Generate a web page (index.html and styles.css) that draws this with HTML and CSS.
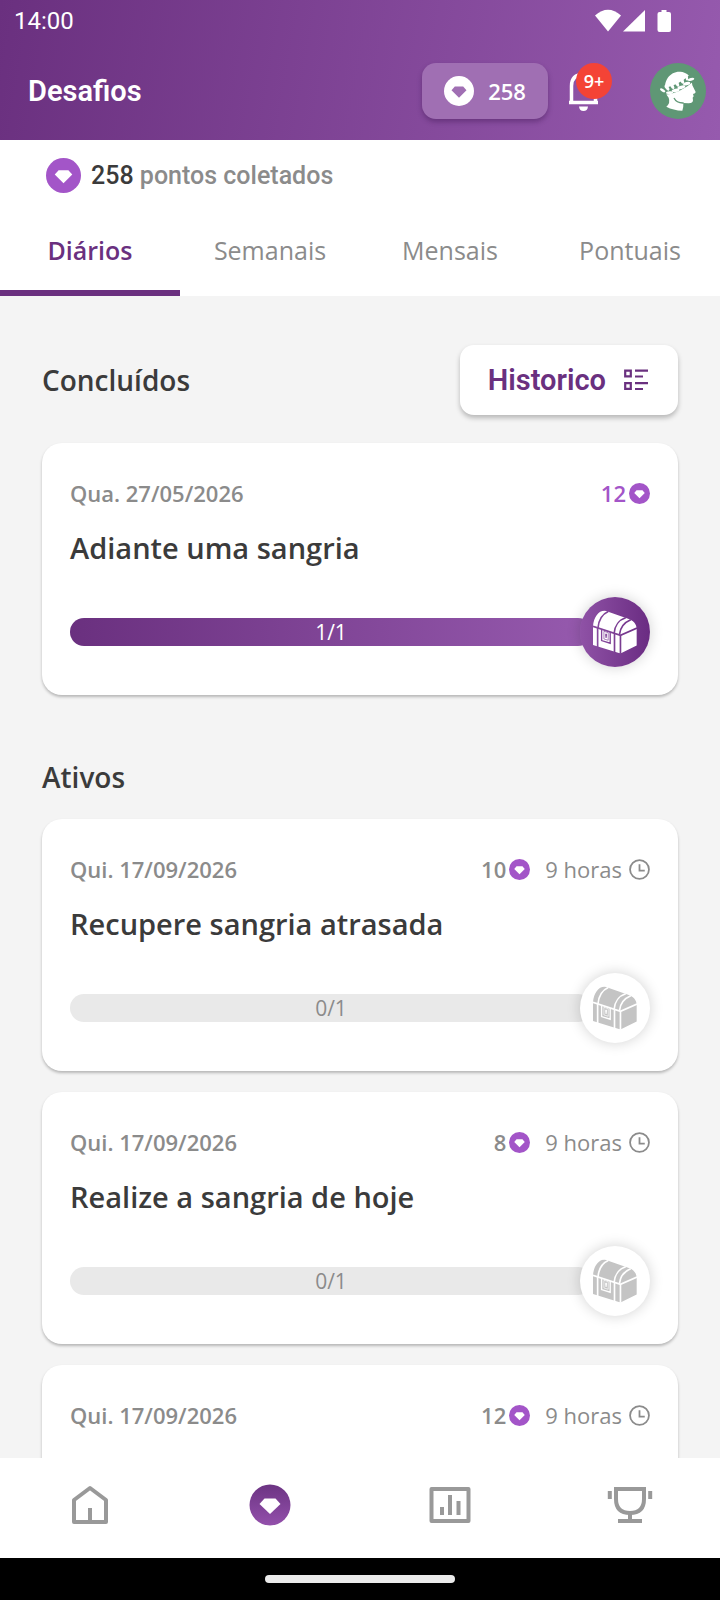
FILE: index.html
```html
<!DOCTYPE html>
<html lang="pt-BR">
<head>
    <meta charset="UTF-8">
    <meta name="viewport" content="width=device-width, initial-scale=1.0">
    <title>Desafios</title>
    <link rel="stylesheet" href="styles.css">
</head>
<body>
    <!-- shared icons -->
    <svg class="sprite" aria-hidden="true">
        <defs>
            <mask id="gem-hole">
                <rect width="36" height="36" fill="#fff"/>
                <path d="M13 12.500h10l4 4.500-9 9-9-9z" fill="#000"/>
            </mask>
            <mask id="chest-seams" maskUnits="userSpaceOnUse" x="0" y="0" width="133" height="132">
                <rect width="133" height="132" fill="#fff"/>
                <g fill="none" stroke="#000" stroke-width="5">
                    <path d="M0 49L83 76L133 54"/>
                    <path d="M15 54C17 32 28 12 46 4"/>
                    <path d="M14 54V112"/>
                    <path d="M64 69C66 47 79 29 99 23"/>
                    <path d="M80 74C82 53 95 37 114 29"/>
                    <path d="M65 70V128M83 76V132"/>
                    <path d="M26 58V92L52 100V66" stroke-width="4"/>
                </g>
                <path d="M33 64L46 68V91L33 87Z" fill="none" stroke="#000" stroke-width="2"/>
                <path d="M37 71h5v5l-1 8h-3l-1-8z" fill="#000"/>
            </mask>
        </defs>
        <symbol id="coin" viewBox="0 0 36 36">
            <circle cx="18" cy="18" r="18" fill="currentColor" mask="url(#gem-hole)"/>
        </symbol>
        <symbol id="chest" viewBox="0 0 133 132">
            <path d="M0 48C2 22 16 2 35 1L104 25C122 30 132 42 132 57V107L83 131L0 105Z" fill="currentColor" mask="url(#chest-seams)"/>
        </symbol>
        <symbol id="clock" viewBox="0 0 20 20">
            <circle cx="10" cy="10" r="9" fill="none" stroke="currentColor" stroke-width="1.700"/>
            <path d="M10 5v6h5" fill="none" stroke="currentColor" stroke-width="1.700"/>
        </symbol>
    </svg>

    <div class="app">
        <header class="header">
            <div class="status">
                <span>14:00</span>
                <svg class="status-icons" viewBox="0 0 78 24" fill="#fff" aria-hidden="true">
                    <path d="M0 6.500Q13-5 26 6.500L13 22.500z"/>
                    <path d="M50 1v21.500H28z"/>
                    <path d="M66.500 1h5v2H74q2 0 2 2v16q0 2-2 2H64.500q-2 0-2-2V5q0-2 2-2h2z"/>
                </svg>
            </div>
            <div class="toolbar">
                <h1>Desafios</h1>
                <button class="points" type="button">
                    <svg class="coin-points" aria-hidden="true"><use href="#coin"/></svg>
                    <span>258</span>
                </button>
                <button class="bell" type="button" aria-label="Notificações">
                    <svg viewBox="0 0 32 40" fill="none" aria-hidden="true">
                        <path d="M3.500 31V15C3.500 7 8 3.500 15.500 3.500S27.500 7 27.500 15V31" stroke="#fff" stroke-width="3.500"/>
                        <path d="M1 31.500h29" stroke="#fff" stroke-width="3.500"/>
                        <path d="M11 35.500h9q-.5 4.500-4.500 4.500t-4.500-4.500z" fill="#fff"/>
                    </svg>
                    <span class="badge">9+</span>
                </button>
                <button class="avatar" type="button" aria-label="Perfil">
                    <svg viewBox="31 24 168 168" aria-hidden="true">
                        <circle cx="115" cy="108" r="84" fill="#5f9775"/>
                        <path d="M77 108C71 76 92 48 122 50C140 52 151 61 156 78L158 91L168 111Q168 116 160 117L162 124L159 128L160 136Q160 145 147 145L131 144Q132 154 128 167Q101 166 80 155Q93 144 87 128Q80 121 77 108Z" fill="#fff"/>
                        <path d="M103 129Q111 145 132 144" fill="none" stroke="#5f9775" stroke-width="4"/>
                        <!-- laurel -->
                        <path d="M62 108Q110 112 160 66" fill="none" stroke="#5f9775" stroke-width="22"/>
                        <g fill="#fff">
                            <ellipse cx="82" cy="98" rx="10" ry="5" transform="rotate(55 82 98)"/>
                            <ellipse cx="97" cy="92" rx="11" ry="5" transform="rotate(62 97 92)"/>
                            <ellipse cx="112" cy="85" rx="11" ry="5" transform="rotate(66 112 85)"/>
                            <ellipse cx="127" cy="76" rx="11" ry="5" transform="rotate(70 127 76)"/>
                            <ellipse cx="141" cy="67" rx="10" ry="4" transform="rotate(80 141 67)"/>
                            <ellipse cx="69" cy="106" rx="9" ry="4" transform="rotate(30 69 106)"/>
                            <ellipse cx="90" cy="113" rx="11" ry="4" transform="rotate(-4 90 113)"/>
                            <ellipse cx="108" cy="106" rx="12" ry="5" transform="rotate(-10 108 106)"/>
                            <ellipse cx="125" cy="97" rx="12" ry="5" transform="rotate(-14 125 97)"/>
                            <ellipse cx="141" cy="86" rx="11" ry="5" transform="rotate(-14 141 86)"/>
                            <ellipse cx="154" cy="73" rx="10" ry="4" transform="rotate(-14 154 73)"/>
                        </g>
                    </svg>
                </button>
            </div>
        </header>

        <section class="summary">
            <p class="collected">
                <svg class="coin-lg" aria-hidden="true"><use href="#coin"/></svg>
                <span><b>258</b> pontos coletados</span>
            </p>
            <div class="tabs" role="tablist">
                <button class="tab active" type="button" role="tab" aria-selected="true">Diários</button>
                <button class="tab" type="button" role="tab" aria-selected="false">Semanais</button>
                <button class="tab" type="button" role="tab" aria-selected="false">Mensais</button>
                <button class="tab" type="button" role="tab" aria-selected="false">Pontuais</button>
            </div>
        </section>

        <main class="content">
            <div class="section-head">
                <h2>Concluídos</h2>
                <button class="history" type="button">
                    <span>Historico</span>
                    <svg viewBox="0 0 24 22" fill="none" stroke="currentColor" aria-hidden="true">
                        <path d="M1.200 1.700h5.600v5.600H1.200zM1.200 14.200h5.600v5.600H1.200z" stroke-width="2.200"/>
                        <path d="M11 1.700h13M11 7.500h8M11 14.200h13M11 20h8" stroke-width="2.200"/>
                    </svg>
                </button>
            </div>

            <article class="card done">
                <div class="meta">
                    <span class="date">Qua. 27/05/2026</span>
                    <span class="reward">12<svg class="coin-sm" aria-hidden="true"><use href="#coin"/></svg></span>
                </div>
                <h3>Adiante uma sangria</h3>
                <div class="progress">
                    <div class="bar">1/1</div>
                    <div class="knob"><svg aria-hidden="true"><use href="#chest"/></svg></div>
                </div>
            </article>

            <h2 class="section-title">Ativos</h2>

            <div class="list">
                <article class="card">
                    <div class="meta">
                        <span class="date">Qui. 17/09/2026</span>
                        <span class="reward">10<svg class="coin-sm" aria-hidden="true"><use href="#coin"/></svg></span>
                        <span class="time">9 horas<svg aria-hidden="true"><use href="#clock"/></svg></span>
                    </div>
                    <h3>Recupere sangria atrasada</h3>
                    <div class="progress">
                        <div class="bar">0/1</div>
                        <div class="knob"><svg aria-hidden="true"><use href="#chest"/></svg></div>
                    </div>
                </article>

                <article class="card">
                    <div class="meta">
                        <span class="date">Qui. 17/09/2026</span>
                        <span class="reward">8<svg class="coin-sm" aria-hidden="true"><use href="#coin"/></svg></span>
                        <span class="time">9 horas<svg aria-hidden="true"><use href="#clock"/></svg></span>
                    </div>
                    <h3>Realize a sangria de hoje</h3>
                    <div class="progress">
                        <div class="bar">0/1</div>
                        <div class="knob"><svg aria-hidden="true"><use href="#chest"/></svg></div>
                    </div>
                </article>

                <article class="card">
                    <div class="meta">
                        <span class="date">Qui. 17/09/2026</span>
                        <span class="reward">12<svg class="coin-sm" aria-hidden="true"><use href="#coin"/></svg></span>
                        <span class="time">9 horas<svg aria-hidden="true"><use href="#clock"/></svg></span>
                    </div>
                </article>
            </div>
        </main>

        <nav class="bottom-nav">
            <a href="#inicio" aria-label="Início">
                <svg viewBox="0 0 44 44" fill="none" stroke="currentColor" stroke-width="4" stroke-linejoin="round" aria-hidden="true">
                    <path d="M6 39V17L22 5L38 17V39Z"/>
                    <path d="M22 39V25"/>
                </svg>
            </a>
            <a href="#desafios" aria-label="Desafios">
                <svg viewBox="0 0 44 44" aria-hidden="true">
                    <defs>
                        <linearGradient id="coin-fill" x1="0" y1="0" x2="0" y2="1">
                            <stop offset="0" stop-color="#6c3483"/>
                            <stop offset="1" stop-color="#9350ab"/>
                        </linearGradient>
                    </defs>
                    <circle cx="22" cy="22" r="20.500" fill="url(#coin-fill)"/>
                    <path d="M16.500 15.500h11l5 5.500L22 31L11.500 21z" fill="#fff"/>
                </svg>
            </a>
            <a href="#relatorios" aria-label="Relatórios">
                <svg viewBox="0 0 44 44" fill="none" stroke="currentColor" stroke-width="4" aria-hidden="true">
                    <rect x="3.500" y="6" width="37" height="32" stroke-linejoin="round"/>
                    <path d="M14 32v-8M22 32V12M30.500 32V18"/>
                </svg>
            </a>
            <a href="#ranking" aria-label="Ranking">
                <svg viewBox="0 0 44 44" fill="none" stroke="currentColor" stroke-width="4" aria-hidden="true">
                    <path d="M8 6H36V16Q36 30 22 30T8 16Z"/>
                    <path d="M22 30v8M10 38h24"/>
                    <path d="M1.800 8v8M42.200 8v8"/>
                </svg>
            </a>
        </nav>
        <div class="gesture"><span></span></div>
    </div>
</body>
</html>
```
FILE: styles.css
```css
* {
    box-sizing: border-box;
}

body {
    margin: 0;
    font-family: "Open Sans", "Noto Sans", sans-serif;
    color: #3b3b3b;
    background-color: #f4f4f4;
}

h1, h2, h3, p {
    margin: 0;
}

button {
    padding: 0;
    border: none;
    background: none;
    font: inherit;
    color: inherit;
    cursor: pointer;
}

.sprite {
    position: absolute;
    width: 0;
    height: 0;
}

.app {
    display: flex;
    flex-direction: column;
    height: 100vh;
}

/* header */
.header {
    height: 140px;
    flex-shrink: 0;
    color: #fff;
    background: linear-gradient(100deg, #6a307f, #965aae);
}

.status {
    display: flex;
    justify-content: space-between;
    align-items: center;
    height: 42px;
    padding: 0 47px 0 14px;
    font-family: Roboto, sans-serif;
    font-size: 24px;
}

.status-icons {
    width: 78px;
    height: 24px;
}

.toolbar {
    display: flex;
    align-items: center;
    height: 98px;
    padding: 0 14px 0 28px;
}

.toolbar h1 {
    margin-right: auto;
    font-family: Roboto, sans-serif;
    font-size: 29px;
    font-weight: 600;
}

.points {
    display: flex;
    align-items: center;
    justify-content: center;
    gap: 14px;
    width: 126px;
    height: 56px;
    border-radius: 14px;
    background-color: #a06fb3;
    box-shadow: 0 3px 5px rgba(60, 20, 80, 0.4);
    font-size: 22px;
    font-weight: 600;
}

.coin-points {
    width: 30px;
    height: 30px;
}

.bell {
    position: relative;
    width: 32px;
    height: 40px;
    margin: 0 50px 0 20px;
}

.bell svg {
    display: block;
    width: 32px;
    height: 40px;
    overflow: visible;
}

.badge {
    position: absolute;
    top: -8px;
    left: 8px;
    width: 36px;
    height: 36px;
    border-radius: 50%;
    background-color: #f44336;
    font-size: 18px;
    font-weight: 600;
    line-height: 36px;
    text-align: center;
}

.avatar,
.avatar svg {
    display: block;
    width: 56px;
    height: 56px;
}

/* points and tabs */
.summary {
    flex-shrink: 0;
    background-color: #fff;
}

.collected {
    display: flex;
    align-items: center;
    gap: 10px;
    height: 70px;
    padding: 0 46px;
    font-family: Roboto, sans-serif;
    font-size: 25px;
    font-weight: 500;
    color: #8b8b8b;
}

.collected b {
    font-weight: 500;
    color: #3b3b3b;
}

.coin-lg {
    width: 35px;
    height: 35px;
    color: #a355c8;
}

.tabs {
    display: grid;
    grid-template-columns: repeat(4, 1fr);
}

.tab {
    height: 86px;
    border-bottom: 6px solid transparent;
    font-size: 25px;
    color: #8b8b8b;
}

.tab.active {
    border-color: #6a307f;
    font-weight: 600;
    color: #6a307f;
}

/* content */
.content {
    flex: 1;
    min-height: 0;
    padding: 49px 42px 0;
    overflow-y: auto;
    scrollbar-width: none;
}

.section-head {
    display: flex;
    justify-content: space-between;
    align-items: center;
    margin-bottom: 28px;
}

h2 {
    font-size: 28px;
    font-weight: 600;
    line-height: 36px;
}

.section-title {
    margin: 64px 0 24px;
}

.history {
    display: flex;
    align-items: center;
    gap: 18px;
    height: 70px;
    padding: 0 30px 0 28px;
    border-radius: 14px;
    background-color: #fff;
    box-shadow: 0 3px 5px rgba(0, 0, 0, 0.25);
    font-family: Roboto, sans-serif;
    font-size: 29px;
    font-weight: 600;
    color: #6a307f;
}

.history svg {
    width: 24px;
    height: 22px;
}

.list {
    display: grid;
    gap: 21px;
}

.card {
    height: 252px;
    padding: 35px 28px 0;
    border-radius: 20px;
    background-color: #fff;
    box-shadow: 0 2px 3px rgba(0, 0, 0, 0.25);
}

.meta {
    display: flex;
    align-items: center;
    gap: 15px;
    height: 30px;
    font-size: 22px;
    color: #8b8b8b;
}

.date {
    margin-right: auto;
    font-weight: 600;
}

.reward,
.time {
    display: flex;
    align-items: center;
}

.reward {
    gap: 3px;
    font-weight: 600;
}

.done .reward {
    color: #a355c8;
}

.coin-sm {
    width: 21px;
    height: 21px;
    color: #a355c8;
}

.time {
    gap: 7px;
}

.time svg {
    width: 21px;
    height: 21px;
}

.card h3 {
    margin-top: 22px;
    font-size: 29px;
    font-weight: 600;
    line-height: 36px;
}

.progress {
    display: flex;
    align-items: center;
    height: 70px;
    margin-top: 31px;
}

.bar {
    flex: 1;
    height: 28px;
    border-radius: 14px;
    background-color: #e9e9e9;
    font-size: 21px;
    line-height: 28px;
    text-align: center;
    color: #8b8b8b;
}

.knob {
    display: flex;
    align-items: center;
    justify-content: center;
    width: 70px;
    height: 70px;
    margin-left: -12px;
    border-radius: 50%;
    background-color: #fff;
    box-shadow: 0 0 14px rgba(0, 0, 0, 0.18);
    color: #c4c4c4;
}

.knob svg {
    width: 44px;
    height: 44px;
}

.done .bar {
    background: linear-gradient(90deg, #6a307f, #965aae);
    color: #fff;
}

.done .knob {
    background: linear-gradient(90deg, #8f52a6, #6a2c82);
    color: #fff;
}

/* bottom */
.bottom-nav {
    display: grid;
    grid-template-columns: repeat(4, 1fr);
    flex-shrink: 0;
    height: 100px;
    padding-bottom: 7px;
    background-color: #fff;
}

.bottom-nav a {
    display: flex;
    align-items: center;
    justify-content: center;
    color: #999;
}

.bottom-nav svg {
    width: 44px;
    height: 44px;
    overflow: visible;
}

.gesture {
    display: flex;
    align-items: center;
    justify-content: center;
    flex-shrink: 0;
    height: 42px;
    background-color: #000;
}

.gesture span {
    width: 190px;
    height: 8px;
    border-radius: 4px;
    background-color: #ebebeb;
}
```
